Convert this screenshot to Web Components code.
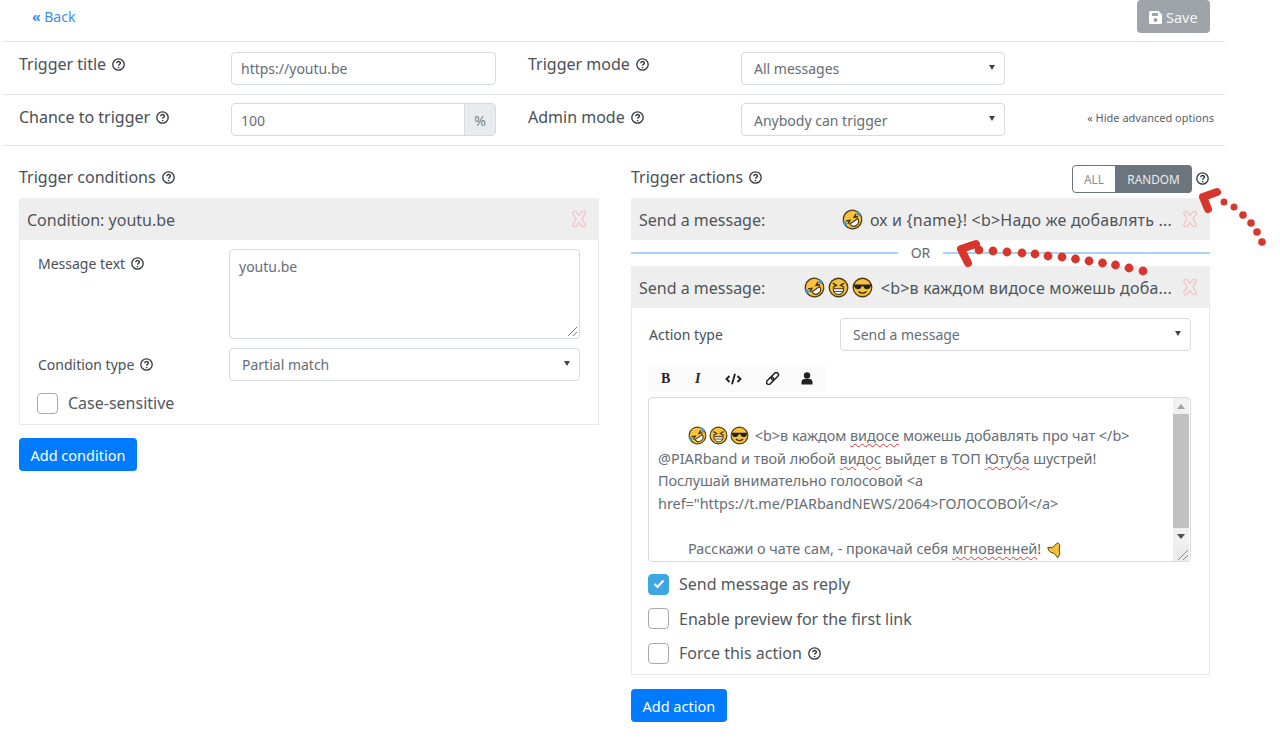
<!DOCTYPE html>
<html>
<head>
<meta charset="utf-8">
<title>Trigger</title>
<style>
  html, body { margin: 0; background: #fff; }
  body { font: 15.2px/24px "Noto Sans", "Open Sans", sans-serif; color: #4a5056; }
</style>
</head>
<body>
<x-page></x-page>
<script>
const define = (name, html) => {
  customElements.define(name, class extends HTMLElement {
    constructor() {
      super();
      this.attachShadow({ mode: "open" }).innerHTML = typeof html == "function" ? html(this) : html;
    }
  });
};

const face = (inner, rotate) => `<svg width="100%" height="100%" viewBox="0 0 24 24"><g transform="rotate(${rotate || 0} 12 12)"><circle cx="12" cy="12" r="10.6" fill="#f7c23b" stroke="#4b3a17" stroke-width="1.5"/>${inner}</g></svg>`;
const EMOJI = {
  rofl: face(`<path d="M5 9l4 2-4 2M19 9l-4 2 4 2" fill="none" stroke="#3b2d12" stroke-width="1.6"/><path d="M6.5 14.5h11c0 3.5-2.5 5.5-5.5 5.5s-5.5-2-5.5-5.5z" fill="#fff" stroke="#3b2d12" stroke-width="1.2"/><path d="M2.5 7c-2.5 2.500-2.500 5 0 6.500 2.500-1.500 2.500-4 0-6.500zM21.500 7c-2.500 2.500-2.500 5 0 6.500 2.500-1.500 2.500-4 0-6.500z" fill="#2f9ae0"/>`, -35),
  grin: face(`<path d="M5.5 7l4 2.5-4 2.5M18.5 7l-4 2.5 4 2.5" fill="none" stroke="#3b2d12" stroke-width="1.6"/><path d="M6 13.5h12c0 4-2.6 6.5-6 6.5s-6-2.5-6-6.5z" fill="#fff" stroke="#3b2d12" stroke-width="1.2"/><path d="M6.5 16.5h11" stroke="#3b2d12"/>`),
  cool: face(`<path d="M2 8.5h20l-.5 1.5c-.5 3-2.5 4-4.5 4s-3.5-1.500-4-3.500h-2c-.5 2-2 3.500-4 3.500s-4-1-4.500-4z" fill="#222"/><path d="M7.500 16.500c2.500 2.500 6.500 2.500 9 0" fill="none" stroke="#3b2d12" stroke-width="1.6"/>`),
  shout: `<svg width="100%" height="100%" viewBox="0 0 24 24"><path d="M4 9l6 .5 8-7 3 3-1 7 1 6-3 5-5-6-5-1.500-3-3z" fill="#f7c23b" stroke="#5a4516" stroke-width="1.4"/></svg>`,
};
define("x-emoji", el => `<style>:host{display:inline-block;width:var(--size,20px);height:var(--size,20px);vertical-align:-4px;margin-right:var(--gap,0)}</style>${EMOJI[el.getAttribute("name")]}`);

define("x-help", `<style>:host{display:inline-block;width:13px;height:13px;margin-left:2px;vertical-align:-1px;color:#33383d}svg{display:block}</style>
<svg width="13" height="13" viewBox="0 0 13 13" fill="none" stroke="currentColor"><circle cx="6.5" cy="6.5" r="5.7" stroke-width="1.3"/><path d="M4.7 5.2c0-2.300 3.700-2.300 3.700-.2 0 1.300-1.800 1.300-1.800 2.800" stroke-width="1.4"/><path d="M6.600 9v1.300" stroke-width="1.4"/></svg>`);

const boxCss = `:host{display:block;box-sizing:border-box;height:33px;border:1px solid #d6dadf;border-radius:4px;background:#fff;padding:0 12px 0 9px;font-size:14px;line-height:31px;color:#666d74;white-space:nowrap}`;
define("x-input", `<style>${boxCss}</style><slot></slot>`);
define("x-group", `<style>:host{display:flex;height:33px;box-sizing:border-box;border:1px solid #d6dadf;border-radius:4px;font-size:14px;line-height:31px;color:#666d74}
  .v{flex:1;padding-left:9px}.a{width:30px;border-left:1px solid #d6dadf;background:#e9ecef;text-align:center;color:#7b8288}</style>
  <div class="v"><slot></slot></div><div class="a">%</div>`);
define("x-select", `<style>${boxCss} :host{display:flex;justify-content:space-between;padding-left:12px;padding-right:9px}
  i{align-self:center;border:3.5px solid transparent;border-top:5px solid #444;border-bottom:0;margin-top:-2px}</style><span><slot></slot></span><i></i>`);
define("x-area", `<style>${boxCss} :host{height:90px;position:relative;padding-top:1px}
  svg{position:absolute;right:1px;bottom:1px}</style><slot></slot>
  <svg width="11" height="11" viewBox="0 0 11 11" stroke="#777"><path d="M1 10l9-9M6 10l4-4"/></svg>`);

define("x-check", el => `<style>:host{display:flex;align-items:center;gap:10px;height:24px;font-size:16px;color:#52585e}
  .b{box-sizing:border-box;width:21px;height:21px;border:1.5px solid #a9a9a9;border-radius:4px;background:#fff;display:flex;align-items:center;justify-content:center}
  .b.on{background:#3ea6e3;border-color:#3ea6e3}</style>
  <div class="b ${el.hasAttribute("checked") ? "on" : ""}">${el.hasAttribute("checked") ? `<svg width="12" height="10" viewBox="0 0 12 10"><path d="M1.5 5l3 3 6-6.5" fill="none" stroke="#fff" stroke-width="2.2"/></svg>` : ""}</div><span><slot></slot></span>`);

define("x-btn", `<style>:host{display:inline-block;height:33px;box-sizing:border-box;padding:0 12px;border-radius:4px;background:#007bff;color:#fff;font-size:14.5px;line-height:35px;white-space:nowrap}
  :host([muted]){background:#9ea4aa;color:#f4f5f6}</style><slot></slot>`);

define("x-row", `<style>:host{display:grid;grid-template-columns:212px 265px 245px 264px 1fr;box-sizing:border-box;padding-left:16px;border-bottom:1px solid #e2e4e6}</style><slot></slot>`);

define("x-card", `<style>:host{display:block}
  .head{height:42px;box-sizing:border-box;padding:2px 12px 0 8px;background:#eeeeee;display:flex;align-items:center;font-size:16px;color:#4f555b;white-space:nowrap}
  .fill{flex:1;display:flex;justify-content:flex-end;padding-right:10px;overflow:hidden}
  svg{flex:none;margin-top:-2px}
  .body{border:1px solid #e6e8ea;border-top:0;box-sizing:border-box}
  :host([closed]) .body{display:none}</style>
  <div class="head"><slot name="title"></slot><div class="fill"><slot name="preview"></slot></div>
  <svg width="16" height="18" viewBox="0 0 16 18" fill="none" stroke="#f2c9cc" stroke-width="1.5"><path d="M2.500 1.500h2.500L8 5.500l3-4h2.500l1 1.500L11 9l3.500 6-1 1.500H11L8 12.500l-3 4H2.500l-1-1.500L5 9 1.500 3z"/></svg></div>
  <div class="body"><slot></slot></div>`);

define("x-toggle", `<style>:host{display:flex;height:28px;box-sizing:border-box;width:120px;border-radius:4px;font-size:11.8px;line-height:28px;text-align:center;overflow:hidden}
  .a{width:43px;box-sizing:border-box;border:1px solid #6c757d;border-right:0;border-radius:4px 0 0 4px;line-height:26px;color:#868e96}
  .b{flex:1;background:#6c757d;color:#e9ecef}</style><div class="a">ALL</div><div class="b">RANDOM</div>`);

define("x-toolbar", `<style>:host{display:flex;align-items:center;height:27px;width:177px;background:#fafafa;box-sizing:border-box;padding-left:13px;color:#222}
  b,i{font:bold 14px "Liberation Serif",serif;flex:none}
  b{width:34px}
  i{width:30px;font-style:italic}
  svg{flex:none;display:block}</style>
  <b>B</b><i>I</i>
  <svg width="41" height="12" viewBox="0 0 41 12" fill="none" stroke="#222" stroke-width="1.9"><path d="M4.500 3L1.500 6l3 3M12.500 3l3 3-3 3M10 .8L7 11.200"/></svg>
  <svg width="35" height="13" viewBox="0 0 35 13" fill="none" stroke="#222" stroke-width="1.5"><g transform="rotate(-45 6.500 6.500)"><rect x="-1" y="4.300" width="8.500" height="4.400" rx="2.200"/><rect x="5.500" y="4.300" width="8.500" height="4.400" rx="2.200"/></g></svg>
  <svg width="12" height="13" viewBox="0 0 12 13" fill="#222"><circle cx="6" cy="3.500" r="3.200"/><path d="M.5 12.500V10c0-2 1.500-3 3-3h5c1.500 0 3 1 3 3v2.500z"/></svg>`);

define("x-editor", `<style>:host{display:flex;box-sizing:border-box;height:165px;border:1px solid #d6dadf;border-radius:4px;font-size:14.4px;line-height:22.5px;color:#666d74;overflow:hidden;background:#fff}
  .text{flex:1;padding:27px 0 0 9px;min-width:0;white-space:nowrap;--size:19px}
  .bar{width:16px;margin-right:1px;display:flex;flex-direction:column;background:#f1f1f1}
  .u,.d{height:16px;display:flex;align-items:center;justify-content:center}
  .u i{border:4px solid transparent;border-bottom:5px solid #a3a3a3;border-top:0}
  .d i{border:4px solid transparent;border-top:5px solid #505050;border-bottom:0}
  .thumb{height:114px;background:#c1c1c1}
  .rest{flex:1}
  .grip{height:16px;background:#ececec}
  svg{display:block}</style>
  <div class="text"><slot></slot></div>
  <div class="bar"><div class="u"><i></i></div><div class="thumb"></div><div class="d"><i></i></div><div class="rest"></div>
  <div class="grip"><svg width="16" height="16" viewBox="0 0 16 16" stroke="#888"><path d="M5 15L15 5M10 15l5-5"/></svg></div></div>`);

define("x-arrows", `<style>:host{position:absolute;left:0;top:0;pointer-events:none}svg{display:block}</style>
  <svg width="1280" height="300" viewBox="0 0 1280 300">
    <g fill="none" stroke="#d8352c" stroke-width="8" stroke-linejoin="round" stroke-linecap="round"><path d="M1217 192l-14 5 5 12"/><path d="M976 244l-15 5 7 14"/></g>
    <g fill="#d8352c">
      <circle cx="1224" cy="202" r="3.5"/><circle cx="1234" cy="207" r="3.5"/><circle cx="1243" cy="215" r="3.8"/><circle cx="1251" cy="223" r="3.8"/><circle cx="1257" cy="232" r="3.8"/><circle cx="1262" cy="242" r="3.8"/>
      <circle cx="979" cy="250" r="4.4"/><circle cx="993" cy="251" r="4.4"/><circle cx="1007" cy="252" r="4.4"/><circle cx="1022" cy="253" r="4.4"/><circle cx="1035" cy="254" r="4.4"/><circle cx="1048" cy="256" r="4.4"/><circle cx="1062" cy="257" r="4.4"/><circle cx="1075.5" cy="259" r="4.4"/><circle cx="1089" cy="261" r="4.4"/><circle cx="1102.5" cy="263" r="4.4"/><circle cx="1115.5" cy="265" r="4.4"/><circle cx="1129" cy="268" r="4.4"/><circle cx="1143" cy="271" r="4.4"/>
    </g>
  </svg>`);

define("x-page", `<style>
  :host{display:block;position:relative;width:1280px;height:754px;overflow:hidden;font-size:16px}
  .wrap{width:1222px;margin-left:3px}
  .top{display:flex;justify-content:space-between;height:41px;padding:0 15px 0 29px;border-bottom:1px solid #e2e4e6}
  .back{font-size:14px;line-height:34px;color:#3b8fe8}
  .back b{font-weight:700}
  x-btn[muted]{width:73px;padding:0 0 0 12px}
  x-btn svg{vertical-align:-1px;margin-right:4px}
  x-row{height:53px;padding-top:10px}
  x-row + x-row{height:51px;padding-top:8px}
  x-row + x-row .lab{margin-top:2px}
  x-row + x-row x-select, x-row + x-row x-group{line-height:34px}
  .lab{font-size:16px;line-height:24px;color:#4a5056}
  .lab2{padding-left:32px}
  .hide{font-size:11px;line-height:30px;text-align:right;color:#5b6167;padding-right:11px;white-space:nowrap}
  .cols{display:grid;grid-template-columns:580px 579px;column-gap:32px;padding-left:19px;margin:19px 0 0 -3px}
  .h{height:33px;display:flex;justify-content:space-between;align-items:flex-start}
  .tog{display:flex;align-items:flex-start;gap:2px;margin-right:1px}
  .tog x-help{margin-top:7px}
  .cbody{padding:9px 18px 9px 17px;display:grid;grid-template-columns:192px 351px;row-gap:9px;align-items:start}
  .cbody .lab, .g2 .lab{font-size:14px;padding-left:1px}
  .body2{padding:10px 18px 9px 16px}
  .g2{display:grid;grid-template-columns:192px 351px;align-items:center}
  .span{grid-column:1 / 3;margin-top:1px}
  x-toolbar{margin-top:14px}
  x-editor{margin-top:5px}
  .checks{display:flex;flex-direction:column;gap:10.5px;margin-top:10px}
  .or{display:flex;align-items:center;height:26px;font-size:14px;color:#62686e;gap:13px}
  .or i{flex:1;height:2px;background:#a9d3f2}
  .or span{line-height:26px}
  .add{margin-top:14px;padding:0 11.5px}
  .add.l{margin-top:13px}
  p{margin:0}
  .indent{padding-left:30px}
  .sp{text-decoration:underline wavy #e33;text-decoration-thickness:1px;text-underline-offset:2px}
  .em{--gap:2px}
  .tt{color:#4f555b}
  .pv{--size:21px;--gap:3px;letter-spacing:.2px}
</style>
<div class="wrap">
  <div class="top">
    <div class="back"><b>«</b> Back</div>
    <x-btn muted><svg width="13" height="13" viewBox="0 0 13 13" fill="#fff"><path d="M1.5 0h8L13 3.5v8c0 .8-.7 1.500-1.500 1.500h-10C.7 13 0 12.300 0 11.500v-10C0 .7.700 0 1.500 0zM3 2v3h6V2zM6.500 7a2 2 0 100 4 2 2 0 000-4z" fill-rule="evenodd"/></svg>Save</x-btn>
  </div>
  <x-row>
    <div class="lab">Trigger title <x-help></x-help></div>
    <x-input>https://youtu.be</x-input>
    <div class="lab lab2">Trigger mode <x-help></x-help></div>
    <x-select>All messages</x-select>
    <div></div>
  </x-row>
  <x-row>
    <div class="lab">Chance to trigger <x-help></x-help></div>
    <x-group>100</x-group>
    <div class="lab lab2">Admin mode <x-help></x-help></div>
    <x-select>Anybody can trigger</x-select>
    <div class="hide">« Hide advanced options</div>
  </x-row>
  <div class="cols">
    <div>
      <div class="h"><div class="lab">Trigger conditions <x-help></x-help></div></div>
      <x-card>
        <span slot="title" class="tt">Condition: youtu.be</span>
        <div class="cbody">
          <div class="lab" style="margin-top:3px">Message text <x-help></x-help></div>
          <x-area>youtu.be</x-area>
          <div class="lab" style="margin-top:5px">Condition type <x-help></x-help></div>
          <x-select>Partial match</x-select>
          <x-check class="span">Case-sensitive</x-check>
        </div>
      </x-card>
      <x-btn class="add l">Add condition</x-btn>
    </div>
    <div>
      <div class="h">
        <div class="lab">Trigger actions <x-help></x-help></div>
        <div class="tog"><x-toggle></x-toggle><x-help></x-help></div>
      </div>
      <x-card closed>
        <span slot="title" class="tt">Send a message:</span>
        <span slot="preview" class="pv"><x-emoji name="rofl"></x-emoji> ох и {name}! &lt;b&gt;Надо же добавлять ...</span>
      </x-card>
      <div class="or"><i></i><span>OR</span><i></i></div>
      <x-card>
        <span slot="title" class="tt">Send a message:</span>
        <span slot="preview" class="pv"><x-emoji name="rofl"></x-emoji><x-emoji name="grin"></x-emoji><x-emoji name="cool"></x-emoji> &lt;b&gt;в каждом видосе можешь доба...</span>
        <div class="body2">
          <div class="g2">
            <div class="lab">Action type</div>
            <x-select>Send a message</x-select>
          </div>
          <x-toolbar></x-toolbar>
          <x-editor>
            <p class="indent"><x-emoji name="rofl" class="em"></x-emoji><x-emoji name="grin" class="em"></x-emoji><x-emoji name="cool" class="em"></x-emoji> &lt;b&gt;в каждом <span class="sp">видосе</span> можешь добавлять про чат &lt;/b&gt;</p>
            <p>@PIARband и твой любой <span class="sp">видос</span> выйдет в ТОП <span class="sp">Ютуба</span> шустрей!</p>
            <p>Послушай внимательно голосовой &lt;a</p>
            <p>href="https://t.me/PIARbandNEWS/2064&gt;ГОЛОСОВОЙ&lt;/a&gt;</p>
            <p>&nbsp;</p>
            <p class="indent">Расскажи о чате сам, - прокачай себя <span class="sp">мгновенней</span>! <x-emoji name="shout" style="--size:17px"></x-emoji></p>
          </x-editor>
          <div class="checks">
            <x-check checked>Send message as reply</x-check>
            <x-check>Enable preview for the first link</x-check>
            <x-check>Force this action <x-help></x-help></x-check>
          </div>
        </div>
      </x-card>
      <x-btn class="add">Add action</x-btn>
    </div>
  </div>
</div>
<x-arrows></x-arrows>`);
</script>
</body>
</html>
